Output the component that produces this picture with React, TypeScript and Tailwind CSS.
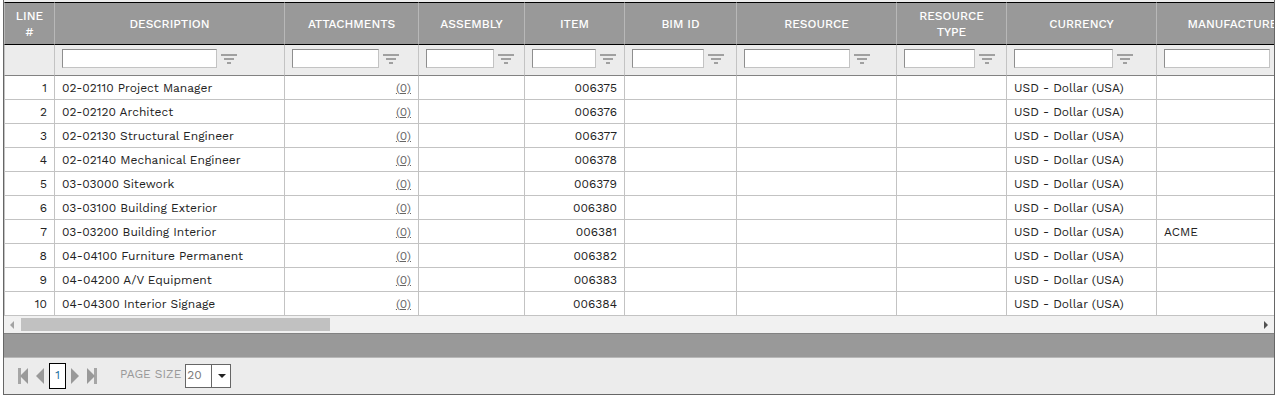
import { useState } from "react";

const columns = [
  { title: "LINE #", col: "w-[51px]", input: "" },
  { title: "DESCRIPTION", col: "w-[230px]", input: "w-[155px]" },
  { title: "ATTACHMENTS", col: "w-[134px]", input: "w-[87px]" },
  { title: "ASSEMBLY", col: "w-[106px]", input: "w-[68px]" },
  { title: "ITEM", col: "w-[100px]", input: "w-[64px]" },
  { title: "BIM ID", col: "w-[112px]", input: "w-[72px]" },
  { title: "RESOURCE", col: "w-[160px]", input: "w-[106px]" },
  { title: "RESOURCE TYPE", col: "w-[110px]", input: "w-[71px]" },
  { title: "CURRENCY", col: "w-[150px]", input: "w-[99px]" },
  { title: "MANUFACTURER", col: "w-[160px]", input: "w-[106px]" },
];

const rows = [
  { description: "02-02110 Project Manager", item: "006375", manufacturer: "" },
  { description: "02-02120 Architect", item: "006376", manufacturer: "" },
  { description: "02-02130 Structural Engineer", item: "006377", manufacturer: "" },
  { description: "02-02140 Mechanical Engineer", item: "006378", manufacturer: "" },
  { description: "03-03000 Sitework", item: "006379", manufacturer: "" },
  { description: "03-03100 Building Exterior", item: "006380", manufacturer: "" },
  { description: "03-03200 Building Interior", item: "006381", manufacturer: "ACME" },
  { description: "04-04100 Furniture Permanent", item: "006382", manufacturer: "" },
  { description: "04-04200 A/V Equipment", item: "006383", manufacturer: "" },
  { description: "04-04300 Interior Signage", item: "006384", manufacturer: "" },
];

const FilterIcon = () => (
  <svg width="16" height="12" viewBox="0 0 16 12" aria-hidden="true">
    <path d="M0 1h16v2H0zM3 5h10v2H3zM6 9h4v2H6z" fill="#a0a0a0" />
  </svg>
);

const PagerIcon = ({ d, bar, width }: { d: string; bar?: string; width: number }) => (
  <svg width={width} height="16" viewBox={`0 0 ${width} 16`} aria-hidden="true">
    {bar && <path d={bar} fill="#a6a6a6" />}
    <path d={d} fill="#999" />
  </svg>
);

const cell = "h-6 border-r border-b border-[#c3c3c3] px-[7px] whitespace-nowrap";

const App = () => {
  const [pageSize, setPageSize] = useState("20");

  return (
    <div className="mr-[5px] ml-[3px] border-x border-b border-[#666] bg-[#ececec] pt-[2px] font-['Work_Sans',Inter,sans-serif] text-xs text-[#222]">
      <div className="overflow-hidden">
        <table className="w-[1313px] table-fixed border-separate border-spacing-0">
          <colgroup>
            {columns.map((column) => (
              <col key={column.title} className={column.col} />
            ))}
          </colgroup>
          <thead>
            <tr className="bg-[#999] text-white">
              {columns.map((column) => (
                <th
                  key={column.title}
                  scope="col"
                  className="h-[43px] border-y border-r border-y-black border-r-[#b8b8b8] px-[7px] leading-4 font-medium first:border-l first:border-l-[#b8b8b8]"
                >
                  {column.title}
                </th>
              ))}
            </tr>
            <tr>
              {columns.map((column) => (
                <td
                  key={column.title}
                  className="h-[31px] border-r border-b border-r-[#c3c3c3] border-b-[#828282] pt-1 pl-[7px] align-top first:border-l first:border-l-[#c3c3c3]"
                >
                  {column.input && (
                    <div className="flex items-start gap-1">
                      <input
                        type="text"
                        aria-label={`Filter ${column.title}`}
                        className={`h-[19px] border border-t-[#8e8e8e] border-r-[#c3c3c3] border-b-[#c3c3c3] border-l-[#8e8e8e] bg-white px-1 ${column.input}`}
                      />
                      <button type="button" aria-label={`Filter options for ${column.title}`} className="pt-1">
                        <FilterIcon />
                      </button>
                    </div>
                  )}
                </td>
              ))}
            </tr>
          </thead>
          <tbody className="bg-white">
            {rows.map((row, index) => (
              <tr key={row.item}>
                <td className={`${cell} border-l text-right`}>{index + 1}</td>
                <td className={cell}>{row.description}</td>
                <td className={`${cell} text-right`}>
                  <a href="#attachments" className="text-[#666] underline">
                    (0)
                  </a>
                </td>
                <td className={cell} />
                <td className={`${cell} text-right`}>{row.item}</td>
                <td className={cell} />
                <td className={cell} />
                <td className={cell} />
                <td className={cell}>USD - Dollar (USA)</td>
                <td className={cell}>{row.manufacturer}</td>
              </tr>
            ))}
          </tbody>
        </table>
      </div>

      <div className="flex h-[17px] items-center bg-[#f1f1f1] px-[6px]">
        <svg width="4" height="8" viewBox="0 0 4 8" aria-hidden="true">
          <path d="M4 0v8L0 4z" fill="#a3a3a3" />
        </svg>
        <div className="flex-1 px-[7px]">
          <div className="h-[13px] w-1/4 bg-[#c1c1c1]" />
        </div>
        <svg width="4" height="8" viewBox="0 0 4 8" aria-hidden="true">
          <path d="M0 0v8l4-4z" fill="#505050" />
        </svg>
      </div>

      <div className="h-[25px] border-t border-b border-t-[#828282] border-b-[#b8b8b8] bg-[#999]" />

      <div className="flex h-9 items-center pl-[14px]">
        <button type="button" aria-label="First page">
          <PagerIcon width={10} bar="M0 0h3v16H0z" d="M10 0v16L2 8z" />
        </button>
        <button type="button" aria-label="Previous page" className="ml-2">
          <PagerIcon width={8} d="M8 0v16L0 8z" />
        </button>
        <button type="button" className="mx-[5px] h-[26px] w-[17px] border border-black bg-white pb-[2px] text-[#1a6f9c]">
          1
        </button>
        <button type="button" aria-label="Next page">
          <PagerIcon width={8} d="M0 0v16l8-8z" />
        </button>
        <button type="button" aria-label="Last page" className="ml-2">
          <PagerIcon width={10} bar="M7 0h3v16H7z" d="M0 0v16l8-8z" />
        </button>
        <label htmlFor="page-size" className="ml-[23px] pb-1 text-[#999]">
          PAGE SIZE
        </label>
        <div className="relative ml-1 flex">
          <select
            id="page-size"
            value={pageSize}
            onChange={(e) => setPageSize(e.target.value)}
            className="h-6 w-[46px] appearance-none border border-[#666] bg-white pb-[2px] pl-px text-[#777]"
          >
            <option>10</option>
            <option>20</option>
            <option>50</option>
          </select>
          <span className="pointer-events-none absolute inset-y-0 right-0 flex w-5 items-center justify-center border-l border-[#666]">
            <svg width="8" height="4" viewBox="0 0 8 4" aria-hidden="true">
              <path d="M0 0h8L4 4z" fill="#222" />
            </svg>
          </span>
        </div>
      </div>
    </div>
  );
};

export default App;
